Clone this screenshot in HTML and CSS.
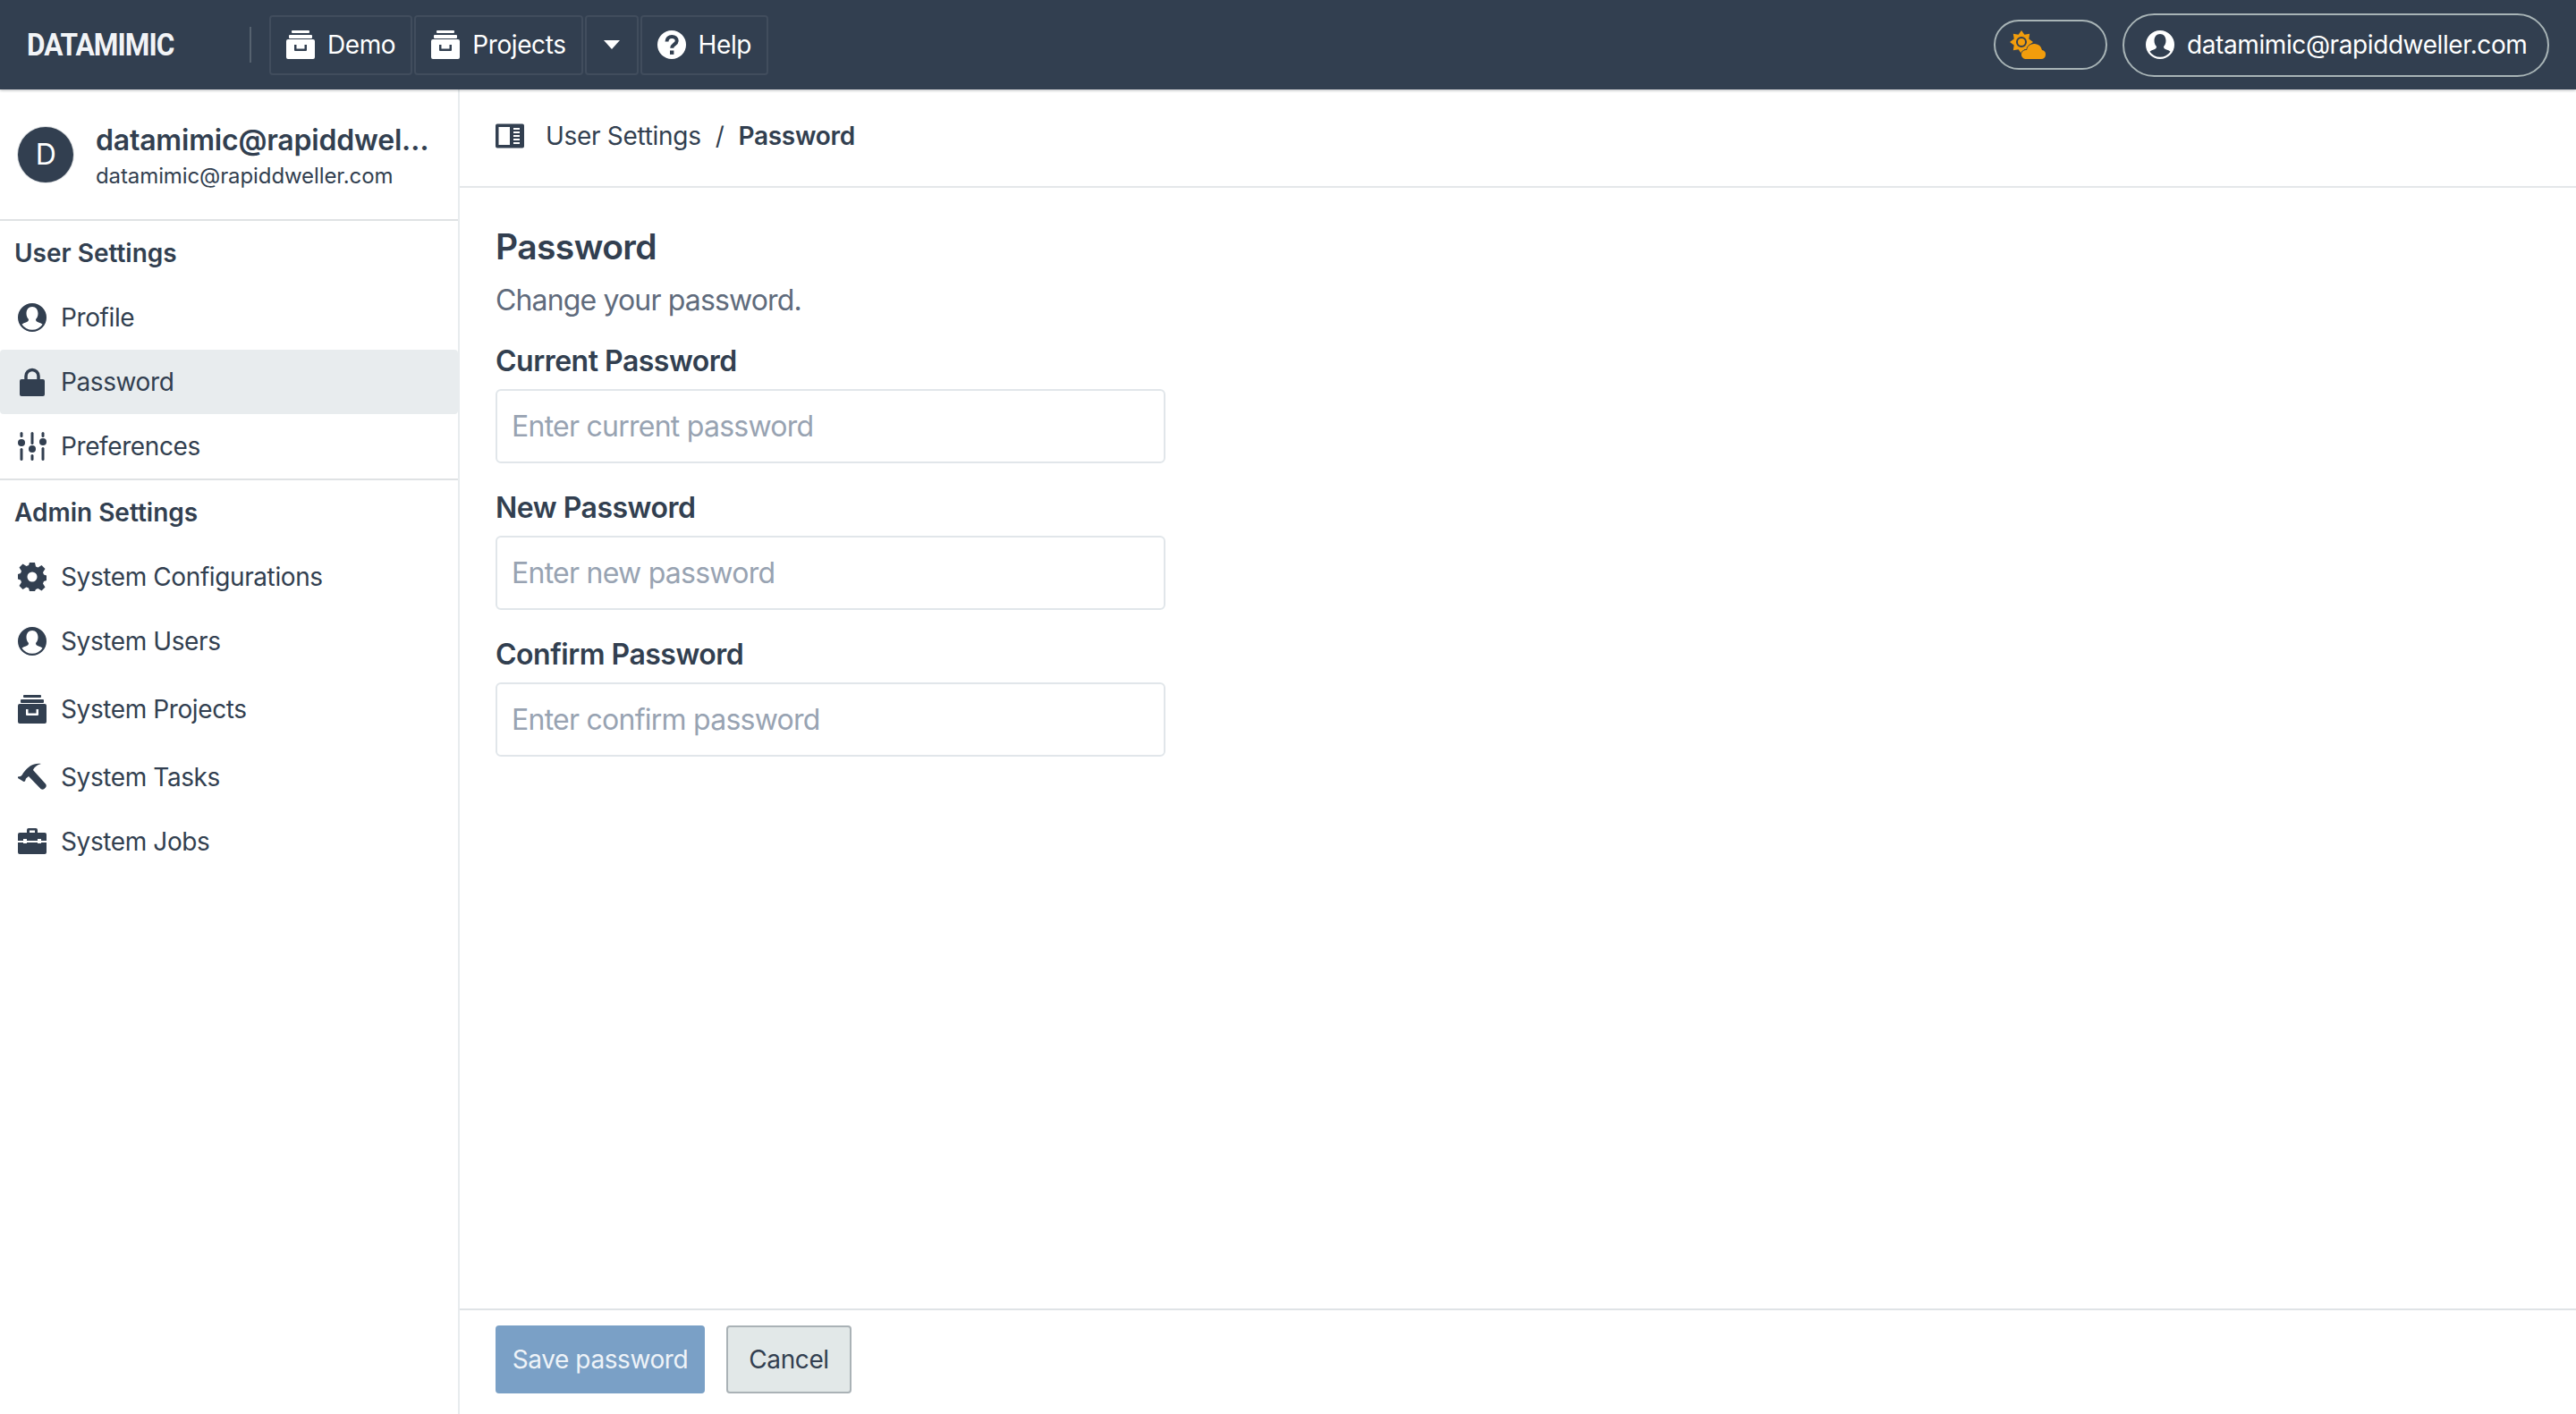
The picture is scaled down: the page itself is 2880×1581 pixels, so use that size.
FILE: index.html
```html
<!doctype html>
<html lang="en">
<head>
  <meta charset="utf-8">
  <title>Password - User Settings</title>
  <link rel="stylesheet" href="styles.css">
</head>
<body>
  <svg class="sprite" xmlns="http://www.w3.org/2000/svg">
    <symbol id="i-archive" viewBox="0 0 32 32">
      <rect x="6" y="0" width="20" height="3" rx="1"/>
      <rect x="3" y="5" width="26" height="4" rx="1"/>
      <path fill-rule="evenodd" d="M2 10h28a2 2 0 0 1 2 2v18a2 2 0 0 1-2 2H2a2 2 0 0 1-2-2V12a2 2 0 0 1 2-2zM9 16v6a1 1 0 0 0 1 1h12a1 1 0 0 0 1-1v-6h-2.500v4.500h-9V16z"/>
    </symbol>
    <symbol id="i-user" viewBox="0 0 32 32">
      <path fill-rule="evenodd" d="M16 0a16 16 0 1 1 0 32a16 16 0 0 1 0-32zM16 4c-4 0-6.500 3-6.500 7.500c0 2.800 1 5 2.500 6.500c0 1.500-.7 2.500-2 3c-2.500 1-4.500 1.500-5.500 2.800a14 14 0 0 0 23 0c-1-1.300-3-1.800-5.500-2.800c-1.300-.5-2-1.500-2-3c1.500-1.500 2.500-3.700 2.500-6.500C22.500 7 20 4 16 4z"/>
    </symbol>
    <symbol id="i-lock" viewBox="0 0 32 32">
      <path d="M9 14V9.500a7 7 0 0 1 14 0V14" fill="none" stroke="currentColor" stroke-width="3.500"/>
      <rect x="2" y="13" width="28" height="19" rx="2"/>
    </symbol>
    <symbol id="i-sliders" viewBox="0 0 32 32">
      <rect x="2.500" y="0" width="3" height="6" rx="1.500"/>
      <circle cx="4" cy="12" r="4"/>
      <rect x="2.500" y="18" width="3" height="14" rx="1.500"/>
      <rect x="14.500" y="0" width="3" height="14" rx="1.500"/>
      <circle cx="16" cy="19" r="4"/>
      <rect x="14.500" y="25" width="3" height="7" rx="1.500"/>
      <rect x="26.500" y="0" width="3" height="6" rx="1.500"/>
      <circle cx="28" cy="11" r="4"/>
      <rect x="26.500" y="17" width="3" height="15" rx="1.500"/>
    </symbol>
    <symbol id="i-gear" viewBox="0 0 32 32">
      <path fill-rule="evenodd" d="M13 0h6l1 4.500l2.500 1l4-2.500l4 4l-2.500 4l1 2.500l3 1v5.500l-3 1l-1 2.500l2.500 4l-4 4l-4-2.500l-2.500 1L19 32h-6l-1-3.500l-2.500-1l-4 2.500l-4-4l2.500-4l-1-2.500l-3-1V13l3-1l1-2.500l-2.500-4l4-4l4 2.500l2.500-1zM16 10.500a5.500 5.500 0 1 0 0 11a5.500 5.500 0 0 0 0-11z"/>
    </symbol>
    <symbol id="i-hammer" viewBox="0 0 32 32">
      <path d="M0 15.500l3-.5c2-1 2-3 4-5C12 4 17 0 26 1c-4 1-8 4-9 7l14 15.500q1.500 2 0 4l-1.500 1.500q-2 1.500-4 0L12 15l-3 2.500l-1 3l-1.500.5L0 17z"/>
    </symbol>
    <symbol id="i-toolbox" viewBox="0 0 32 32">
      <path fill-rule="evenodd" d="M10 6V3a2 2 0 0 1 2-2h8a2 2 0 0 1 2 2v3h8a2 2 0 0 1 2 2v20a2 2 0 0 1-2 2H2a2 2 0 0 1-2-2V8a2 2 0 0 1 2-2zM13 3.500V6h6V3.500z"/>
      <rect x="0" y="15" width="32" height="2" fill="#fff"/>
      <rect x="6" y="13" width="4" height="5" fill="#fff"/>
      <rect x="22" y="13" width="4" height="5" fill="#fff"/>
    </symbol>
    <symbol id="i-book" viewBox="0 0 32 32">
      <path fill-rule="evenodd" d="M2 2.500h28a2 2 0 0 1 2 2v23a2 2 0 0 1-2 2H2a2 2 0 0 1-2-2v-23a2 2 0 0 1 2-2zM3.500 6v20H16V6zM20 7v2h7V7zM20 11v2h7v-2zM20 15v2h7v-2zM20 19v2h7v-2zM20 23v2h7v-2z"/>
    </symbol>
    <symbol id="i-help" viewBox="0 0 32 32">
      <circle cx="16" cy="16" r="16"/>
      <path d="M10.500 12.500c0-3.200 2.400-5.500 5.700-5.500c3.300 0 5.500 2 5.500 4.700c0 3.800-5.500 4.200-5.500 8" fill="none" stroke="#323f50" stroke-width="4"/>
      <rect x="14" y="22.500" width="4.400" height="4.400" fill="#323f50"/>
    </symbol>
    <symbol id="i-sun" viewBox="0 0 40 32">
      <path d="M26 13L21.300 16.400L22.200 22.200L16.400 21.300L13 26L9.600 21.300L3.800 22.200L4.700 16.400L0 13L4.700 9.600L3.800 3.800L9.600 4.700L13 0L16.400 4.700L22.200 3.800L21.300 9.600z"/>
      <circle cx="13" cy="13" r="5" stroke="#323f50" stroke-width="2"/>
      <path d="M17 32H35a5 5 0 0 0 1-9.900a9 9 0 0 0-8-7.100a8 8 0 0 0-9 7a5 5 0 0 0-2 10z" stroke="#323f50" stroke-width="1.500" paint-order="stroke"/>
    </symbol>
  </svg>

  <div class="app">
    <header class="navbar">
      <div class="brand"><span>DATAMIMIC</span></div>
      <div class="nav-divider"></div>
      <nav class="nav-buttons">
        <a class="nav-btn"><svg class="icon"><use href="#i-archive"/></svg>Demo</a>
        <a class="nav-btn"><svg class="icon"><use href="#i-archive"/></svg>Projects</a>
        <a class="nav-btn nav-btn-caret"><span class="caret"></span></a>
        <a class="nav-btn"><svg class="icon"><use href="#i-help"/></svg>Help</a>
      </nav>
      <div class="nav-right">
        <div class="theme-toggle"><svg class="sun"><use href="#i-sun"/></svg></div>
        <div class="user-pill"><svg class="icon"><use href="#i-user"/></svg>datamimic@rapiddweller.com</div>
      </div>
    </header>

    <div class="content">
      <aside class="sidebar">
        <div class="account">
          <div class="avatar">D</div>
          <div class="account-text">
            <div class="account-name">datamimic@rapiddweller.com</div>
            <div class="account-mail">datamimic@rapiddweller.com</div>
          </div>
        </div>

        <div class="menu-group">
          <div class="menu-title">User Settings</div>
          <a class="menu-item"><svg class="icon"><use href="#i-user"/></svg>Profile</a>
          <a class="menu-item active"><svg class="icon"><use href="#i-lock"/></svg>Password</a>
          <a class="menu-item"><svg class="icon"><use href="#i-sliders"/></svg>Preferences</a>
        </div>

        <div class="menu-group admin">
          <div class="menu-title">Admin Settings</div>
          <a class="menu-item"><svg class="icon"><use href="#i-gear"/></svg>System Configurations</a>
          <a class="menu-item"><svg class="icon"><use href="#i-user"/></svg>System Users</a>
          <a class="menu-item tall"><svg class="icon"><use href="#i-archive"/></svg>System Projects</a>
          <a class="menu-item"><svg class="icon"><use href="#i-hammer"/></svg>System Tasks</a>
          <a class="menu-item"><svg class="icon"><use href="#i-toolbox"/></svg>System Jobs</a>
        </div>
      </aside>

      <main class="main">
        <div class="breadcrumb">
          <svg class="icon"><use href="#i-book"/></svg>
          <span>User Settings</span>
          <span class="crumb-sep">/</span>
          <b>Password</b>
        </div>

        <form class="form">
          <h2>Password</h2>
          <p class="form-sub">Change your password.</p>
          <label>Current Password</label>
          <input type="password" placeholder="Enter current password">
          <label>New Password</label>
          <input type="password" placeholder="Enter new password">
          <label>Confirm Password</label>
          <input type="password" placeholder="Enter confirm password">
        </form>

        <div class="form-footer">
          <button class="btn btn-primary" type="button">Save password</button>
          <button class="btn btn-default" type="button">Cancel</button>
        </div>
      </main>
    </div>
  </div>
</body>
</html>
```

FILE: styles.css
```css
* {
  box-sizing: border-box;
}

html, body {
  margin: 0;
  height: 100%;
  overflow: hidden;
}

body {
  font-family: Inter, "Liberation Sans", sans-serif;
  font-size: 28px;
  letter-spacing: -0.4px;
  color: #323f50;
  background: #fff;
}

.sprite {
  display: none;
}

.icon {
  width: 32px;
  height: 32px;
  fill: currentColor;
  flex: none;
}

.app {
  display: flex;
  flex-direction: column;
  height: 100%;
}

/* top bar */
.navbar {
  display: flex;
  align-items: center;
  flex: none;
  height: 100px;
  padding: 0 30px;
  background: #323f50;
  color: #fff;
  box-shadow: 0 1px 3px rgba(16, 22, 26, 0.3);
  position: relative;
}

.brand {
  width: 249px;
  font-family: Roboto, sans-serif;
  font-size: 35px;
  font-weight: 700;
  letter-spacing: -1px;
  color: #f2f4f7;
}

.brand span {
  display: inline-block;
  transform: scaleX(0.9);
  transform-origin: left center;
}

.nav-divider {
  width: 2px;
  height: 40px;
  background: #56626f;
  margin-right: 20px;
}

.nav-buttons {
  display: flex;
  gap: 2px;
}

.nav-btn {
  display: flex;
  align-items: center;
  gap: 14px;
  height: 67px;
  padding: 0 17px;
  border: 2px solid #414d5d;
  border-radius: 4px;
}

.nav-btn-caret {
  padding: 0 19px;
}

.caret {
  width: 0;
  height: 0;
  border-left: 9px solid transparent;
  border-right: 9px solid transparent;
  border-top: 10px solid #fff;
}

.nav-right {
  display: flex;
  align-items: center;
  gap: 17px;
  margin-left: auto;
}

.theme-toggle {
  display: flex;
  align-items: center;
  width: 127px;
  height: 56px;
  padding-left: 16px;
  border: 2px solid #a8b4b6;
  border-radius: 28px;
}

.sun {
  width: 40px;
  height: 32px;
  fill: #f29d0c;
}

.user-pill {
  display: flex;
  align-items: center;
  gap: 14px;
  width: 477px;
  height: 71px;
  padding-left: 24px;
  border: 2px solid #a8b4b6;
  border-radius: 36px;
}

/* sidebar */
.content {
  display: flex;
  flex: 1;
  min-height: 0;
}

.sidebar {
  flex: none;
  width: 514px;
  border-right: 2px solid #e8ecee;
}

.account {
  display: flex;
  align-items: center;
  gap: 25px;
  height: 147px;
  padding: 0 20px;
  border-bottom: 2px solid #dfe2e4;
}

.avatar {
  display: flex;
  align-items: center;
  justify-content: center;
  flex: none;
  width: 62px;
  height: 62px;
  border-radius: 50%;
  background: #323f50;
  color: #fff;
  font-size: 32px;
  box-shadow: 0 0 0 1px #dfe2e4;
}

.account-text {
  min-width: 0;
  flex: 1;
  padding-top: 2px;
  padding-right: 10px;
}

.account-name {
  font-size: 32px;
  font-weight: 600;
  letter-spacing: -0.2px;
  white-space: nowrap;
  overflow: hidden;
  text-overflow: ellipsis;
}

.account-mail {
  margin-top: 6px;
  font-size: 24px;
  letter-spacing: -0.1px;
}

.menu-group {
  border-bottom: 2px solid #dfe2e4;
}

.menu-group.admin {
  border-bottom: 0;
}

.menu-title {
  display: flex;
  align-items: center;
  height: 72px;
  padding-left: 16px;
  font-weight: 600;
  letter-spacing: 0;
}

.menu-item {
  display: flex;
  align-items: center;
  gap: 16px;
  height: 72px;
  padding-left: 20px;
  border-radius: 4px;
}

.menu-item.tall {
  height: 80px;
}

.menu-item.active {
  background: #e8ecee;
}

/* main */
.main {
  display: flex;
  flex-direction: column;
  flex: 1;
  min-width: 0;
}

.breadcrumb {
  display: flex;
  align-items: center;
  flex: none;
  height: 110px;
  padding: 0 40px 4px;
  border-bottom: 2px solid #e4e7e9;
}

.breadcrumb .icon {
  margin-right: 24px;
}

.breadcrumb span {
  letter-spacing: -0.3px;
}

.crumb-sep {
  margin: 0 16px;
}

.breadcrumb b {
  font-weight: 600;
  letter-spacing: -0.3px;
}

.form {
  flex: 1;
  padding: 42px 40px 0;
}

.form h2 {
  margin: 0;
  font-size: 39px;
  font-weight: 600;
  letter-spacing: -0.6px;
  line-height: 48px;
}

.form-sub {
  margin: 14px 0 0;
  font-size: 32px;
  letter-spacing: -0.85px;
  line-height: 44px;
  color: #5f6b7c;
}

.form label {
  display: block;
  margin-top: 24px;
  font-size: 32px;
  font-weight: 600;
  letter-spacing: -0.5px;
  line-height: 44px;
}

.form input + label {
  margin-top: 28px;
}

.form input {
  display: block;
  width: 749px;
  height: 83px;
  margin-top: 9px;
  padding: 0 16px;
  border: 2px solid #e1e6ea;
  border-radius: 6px;
  font-family: inherit;
  font-size: 32px;
  letter-spacing: -0.75px;
  color: #323f50;
  outline: 0;
}

.form input::placeholder {
  color: #98a3b2;
}

.form-footer {
  display: flex;
  gap: 24px;
  flex: none;
  height: 118px;
  padding: 17px 40px 0;
  border-top: 2px solid #dfe3e6;
}

.btn {
  height: 76px;
  padding: 0;
  border-radius: 4px;
  font-family: inherit;
  font-size: 28px;
  letter-spacing: -0.4px;
  white-space: nowrap;
}

.btn-primary {
  width: 234px;
  border: 0;
  background: #7aa0c6;
  color: #eef3f8;
}

.btn-default {
  width: 140px;
  border: 2px solid #aab2b6;
  background: #e2e8e8;
  color: #323f50;
}
```
